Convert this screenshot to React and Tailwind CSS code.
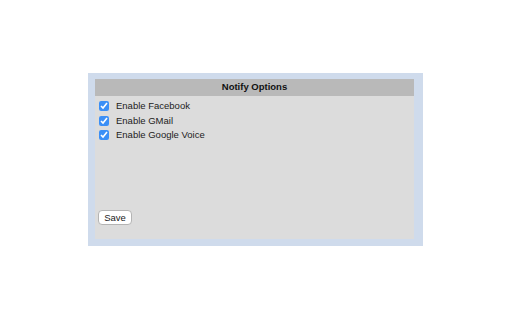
import { useState } from 'react';

const services = ['Enable Facebook', 'Enable GMail', 'Enable Google Voice'];

const App = () => {
    const [checked, setChecked] = useState([true, true, true]);

    return (
        <div className="w-[512px] h-[320px] bg-white pt-[73px] pl-[88px] font-['Liberation_Sans',Arial,sans-serif] text-[9.5px] text-[#222]">
            <div className="w-[335px] h-[173px] bg-[#cfdbec] pt-[6px] pl-[7px]">
                <div className="w-[319px] h-[160px] bg-[#dcdcdc] flex flex-col">
                    <div className="h-[17px] bg-[#b9b9b9] flex items-center justify-center font-bold text-[#111]">
                        Notify Options
                    </div>
                    <div className="flex flex-col pt-[5px] pl-[4px] gap-[4.5px]">
                        {services.map((label, i) => (
                            <label key={i} className="flex items-center h-[10px] gap-[7px]">
                                <input
                                    type="checkbox"
                                    checked={checked[i]}
                                    onChange={() => setChecked(checked.map((c, j) => (j === i ? !c : c)))}
                                    className="m-0 w-[10px] h-[10px] accent-[#3b8ff6]"
                                />
                                <span className="leading-none">{label}</span>
                            </label>
                        ))}
                    </div>
                    <div className="mt-auto mb-[14px] pl-[3px]">
                        <button className="h-[15px] w-[34px] bg-white border border-[#b4b4b4] rounded-[4px] text-[9.5px] leading-none flex items-center justify-center">
                            Save
                        </button>
                    </div>
                </div>
            </div>
        </div>
    );
};

export default App;
